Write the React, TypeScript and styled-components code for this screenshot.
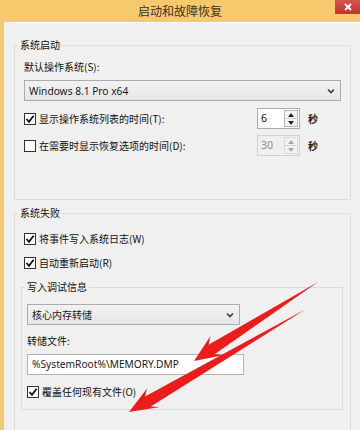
import React from "react";
import styled, { createGlobalStyle } from "styled-components";

const GlobalStyle = createGlobalStyle`
  html, body {
    margin: 0;
    padding: 0;
    background: #f0f0f0;
  }
  body {
    font-family: "Noto Sans CJK SC", "Noto Sans", sans-serif;
    font-size: 10px;
    color: #111;
  }
`;

const Window = styled.div`
  position: relative;
  width: 360px;
  height: 430px;
  overflow: hidden;
  background: #f0f0f0;
  border-left: 4px solid #f5c96c;
  box-sizing: border-box;
  display: flex;
  flex-direction: column;
`;

const TitleBar = styled.div`
  height: 22px;
  flex-shrink: 0;
  background: #f5c96c;
  display: grid;
  grid-template-columns: 1fr auto 1fr;
  margin-left: -4px;
`;

const Title = styled.div`
  grid-column: 2;
  font-size: 12px;
  line-height: 22px;
  color: #3a3328;
`;

const CloseButton = styled.div`
  grid-column: 3;
  justify-self: end;
  width: 25px;
  height: 14px;
  background: linear-gradient(#d4574c, #c2362d);
  display: flex;
  align-items: center;
  justify-content: center;
`;

const Body = styled.div`
  flex: 1;
  display: flex;
  flex-direction: column;
  padding: 22px 9px 0 10px;
  border-top: 1px solid #fbfbfb;
`;

const GroupBox = styled.div<{ $pl: number; $pr: number; $pb: number; $mt?: number }>`
  border: 1px solid #dcdcdc;
  display: flex;
  flex-direction: column;
  padding: 0 ${(p) => p.$pr}px ${(p) => p.$pb}px ${(p) => p.$pl}px;
  margin-top: ${(p) => p.$mt ?? 0}px;
  flex-shrink: 0;
`;

const GroupTitle = styled.div<{ $left: number }>`
  align-self: flex-start;
  margin: -8px 0 0 ${(p) => p.$left}px;
  padding: 0 2px;
  line-height: 14px;
  height: 14px;
  background: #f0f0f0;
`;

const Label = styled.div<{ $mt: number }>`
  line-height: 14px;
  margin-top: ${(p) => p.$mt}px;
`;

const Select = styled.div<{ $mt: number; $width?: number }>`
  margin-top: ${(p) => p.$mt}px;
  height: 21px;
  box-sizing: border-box;
  width: ${(p) => (p.$width ? `${p.$width}px` : "auto")};
  border: 1px solid #acacac;
  background: linear-gradient(#f3f3f3, #e6e6e6);
  display: flex;
  align-items: center;
  justify-content: space-between;
  padding: 0 5px 0 4px;
`;

const SelectText = styled.span<{ $latin?: boolean }>`
  font-family: ${(p) =>
    p.$latin ? `"Noto Sans", "Noto Sans CJK SC", sans-serif` : `"Noto Sans CJK SC", sans-serif`};
  font-size: ${(p) => (p.$latin ? "10.2px" : "10px")};
  color: #1a1a1a;
`;

const CheckRow = styled.div<{ $mt: number; $ml?: number }>`
  display: flex;
  align-items: center;
  margin-top: ${(p) => p.$mt}px;
  margin-left: ${(p) => p.$ml ?? 0}px;
  height: 16px;
`;

const SpinRow = styled.div<{ $mt: number }>`
  display: flex;
  align-items: center;
  margin-top: ${(p) => p.$mt}px;
  height: 21px;
`;

const Box = styled.div`
  width: 12px;
  height: 12px;
  box-sizing: border-box;
  border: 1px solid #333;
  background: #fff;
  display: flex;
  align-items: center;
  justify-content: center;
  flex-shrink: 0;
`;

const CheckText = styled.span`
  margin-left: 3px;
  line-height: 14px;
`;

const Spin = styled.div<{ $disabled?: boolean }>`
  margin-left: auto;
  width: 43px;
  height: 21px;
  box-sizing: border-box;
  border: 1px solid ${(p) => (p.$disabled ? "#d2d2d2" : "#abadb3")};
  background: ${(p) => (p.$disabled ? "#efefef" : "#fff")};
  display: flex;
  align-items: stretch;
  padding: 1px;
`;

const SpinValue = styled.div<{ $disabled?: boolean }>`
  flex: 1;
  font-family: "Noto Sans", sans-serif;
  font-size: 10.5px;
  line-height: 17px;
  padding-left: 2px;
  color: ${(p) => (p.$disabled ? "#8d8d8d" : "#111")};
`;

const SpinButtons = styled.div<{ $disabled?: boolean }>`
  width: 12px;
  display: flex;
  flex-direction: column;
  border: 1px solid ${(p) => (p.$disabled ? "#dadada" : "#b8b8b8")};
  background: ${(p) => (p.$disabled ? "#f2f2f2" : "#f4f4f4")};
`;

const SpinHalf = styled.div<{ $bottom?: boolean }>`
  flex: 1;
  display: flex;
  align-items: center;
  justify-content: center;
  border-top: ${(p) => (p.$bottom ? "1px solid #d0d0d0" : "none")};
`;

const Unit = styled.span`
  margin: 0 23px 0 8px;
  font-weight: bold;
  color: #222;
`;

const TextBox = styled.div`
  margin-top: 6px;
  width: 217px;
  height: 21px;
  box-sizing: border-box;
  border: 1px solid #b4b4b4;
  background: #fff;
  padding-left: 4px;
  font-family: "Noto Sans", sans-serif;
  font-size: 10.2px;
  line-height: 19px;
  color: #1a1a1a;
`;

const ArrowLayer = styled.svg`
  position: absolute;
  top: 0;
  left: -4px;
  pointer-events: none;
`;

function Chevron() {
  return (
    <svg width="8" height="6" viewBox="0 0 8 6">
      <path d="M1 1.5 L4 4.5 L7 1.5" fill="none" stroke="#3c3c3c" strokeWidth="1.6" />
    </svg>
  );
}

function Check({ checked, label, mt, ml }: { checked: boolean; label: string; mt: number; ml?: number }) {
  return (
    <CheckRow $mt={mt} $ml={ml}>
      <Box>
        {checked && (
          <svg width="10" height="10" viewBox="0 0 10 10">
            <path d="M1.5 5 L4 7.8 L8.6 1.8" fill="none" stroke="#111" strokeWidth="1.8" />
          </svg>
        )}
      </Box>
      <CheckText>{label}</CheckText>
    </CheckRow>
  );
}

function SpinBox({ value, disabled }: { value: string; disabled?: boolean }) {
  const c = disabled ? "#a8a8a8" : "#222";
  return (
    <Spin $disabled={disabled}>
      <SpinValue $disabled={disabled}>{value}</SpinValue>
      <SpinButtons $disabled={disabled}>
        <SpinHalf>
          <svg width="6" height="4" viewBox="0 0 6 4">
            <path d="M0 4 L3 0 L6 4 Z" fill={c} />
          </svg>
        </SpinHalf>
        <SpinHalf $bottom>
          <svg width="6" height="4" viewBox="0 0 6 4">
            <path d="M0 0 L6 0 L3 4 Z" fill={c} />
          </svg>
        </SpinHalf>
      </SpinButtons>
    </Spin>
  );
}

export default function App() {
  return (
    <>
      <GlobalStyle />
      <Window>
        <TitleBar>
          <Title>启动和故障恢复</Title>
          <CloseButton>
            <svg width="8" height="8" viewBox="0 0 8 8">
              <path d="M1 1 L7 7 M7 1 L1 7" stroke="#fff" strokeWidth="1.8" />
            </svg>
          </CloseButton>
        </TitleBar>
        <Body>
          <GroupBox $pl={9} $pr={9} $pb={43}>
            <GroupTitle $left={-6}>系统启动</GroupTitle>
            <Label $mt={8}>默认操作系统(S):</Label>
            <Select $mt={6}>
              <SelectText $latin>Windows 8.1 Pro x64</SelectText>
              <Chevron />
            </Select>
            <SpinRow $mt={7}>
              <Check checked mt={0} label="显示操作系统列表的时间(T):" />
              <SpinBox value="6" />
              <Unit>秒</Unit>
            </SpinRow>
            <SpinRow $mt={6}>
              <Check checked={false} mt={0} label="在需要时显示恢复选项的时间(D):" />
              <SpinBox value="30" disabled />
              <Unit>秒</Unit>
            </SpinRow>
          </GroupBox>

          <GroupBox $pl={6} $pr={7} $pb={30} $mt={13}>
            <GroupTitle $left={-3}>系统失败</GroupTitle>
            <Check checked mt={11} ml={3} label="将事件写入系统日志(W)" />
            <Check checked mt={8} ml={3} label="自动重新启动(R)" />
            <GroupBox $pl={5} $pr={5} $pb={9} $mt={16}>
              <GroupTitle $left={-2}>写入调试信息</GroupTitle>
              <Select $mt={10} $width={213}>
                <SelectText>核心内存转储</SelectText>
                <Chevron />
              </Select>
              <Label $mt={9}>转储文件:</Label>
              <TextBox>%SystemRoot%\MEMORY.DMP</TextBox>
              <Check checked mt={9} label="覆盖任何现有文件(O)" />
            </GroupBox>
          </GroupBox>
        </Body>
        <ArrowLayer width="360" height="430" viewBox="0 0 360 430">
          <polygon
            points="194,361 210.5,336 208.5,344.8 318,282 214.5,354.3 224,355"
            fill="#ec1c1c"
          />
          <polygon
            points="129,412 147,388.5 145,396.6 306,309 150.8,406.5 160,407"
            fill="#ec1c1c"
          />
        </ArrowLayer>
      </Window>
    </>
  );
}
